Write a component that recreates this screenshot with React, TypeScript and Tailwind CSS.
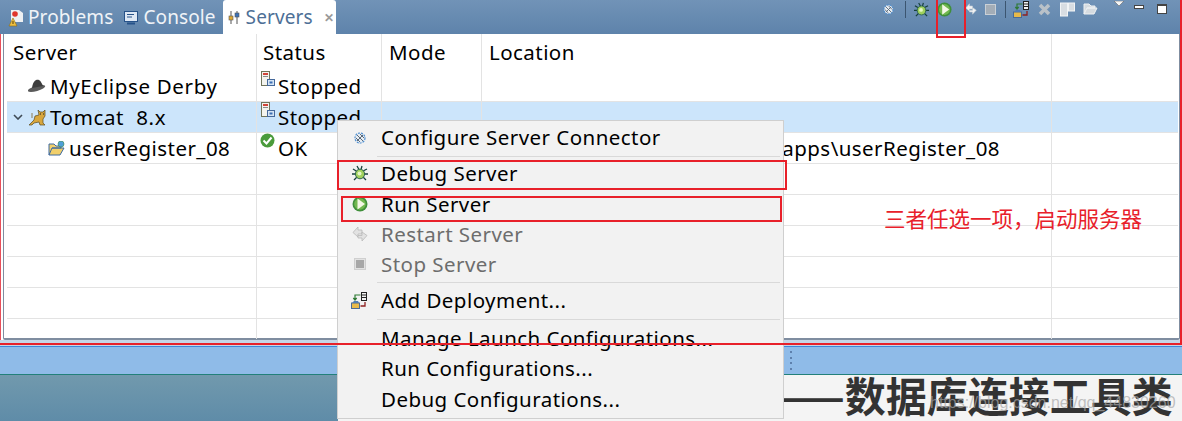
import type { ReactNode } from 'react';

const font = { fontFamily: '"Noto Sans", sans-serif' };

function StoppedIcon() {
  return (
    <svg width="14" height="15" viewBox="0 0 14 15" className="shrink-0">
      <rect x="0.5" y="0.5" width="8" height="14" fill="#f4f4ee" stroke="#70745a" />
      <rect x="2" y="2" width="5" height="2" fill="#d0453a" />
      <rect x="2" y="5" width="5" height="1" fill="#8a8a8a" />
      <rect x="6.5" y="8.5" width="7" height="6" fill="#d5e4f4" stroke="#45689a" />
      <rect x="8.5" y="10.5" width="3" height="2" fill="#3d6fb4" />
    </svg>
  );
}

function PlayIcon({ size = 16 }: { size?: number }) {
  return (
    <svg width={size} height={size} viewBox="0 0 16 16" className="shrink-0">
      <circle cx="8" cy="8" r="7.5" fill="#3f8f3a" />
      <circle cx="8" cy="8" r="5.8" fill="#72b84f" />
      <path d="M5.5 2.5 L13 8 L5.5 13.5 Z" fill="#f4f7e6" />
    </svg>
  );
}

function BugIcon({ size = 16 }: { size?: number }) {
  return (
    <svg width={size} height={size} viewBox="0 0 16 16" className="shrink-0">
      <path d="M1 4 L5 6.5 M15 4 L11 6 M0 9 L4 9 M16 9 L12 9 M2 15 L5 12 M14 15 L11 12 M5 1 L7 4.5 M10 1 L9 4.5" stroke="#17403c" strokeWidth="1.3" />
      <ellipse cx="8" cy="9" rx="4.6" ry="4.8" fill="#9fd05c" stroke="#2f6650" />
      <circle cx="7.5" cy="8.5" r="2" fill="#e4f6c6" />
    </svg>
  );
}

function RestartIcon({ size = 16, light }: { size?: number; light?: boolean }) {
  const a = light ? '#f2f3f4' : '#e2e2e2';
  const b = light ? '#c3ccd4' : '#b9b9b9';
  return (
    <svg width={size} height={size} viewBox="0 0 16 16" className="shrink-0">
      <path d="M1 6.5 L6 1 L6 4 L10 4 L10 8 L6 8 L6 11 Z" fill={a} stroke={b} strokeWidth="0.8" />
      <path d="M15 9.5 L10 15 L10 12 L6 12 L6 9.5 L10 9.5 L10 6 Z" fill={a} stroke={b} strokeWidth="0.8" />
    </svg>
  );
}

function StopIcon() {
  return (
    <svg width="12" height="12" viewBox="0 0 12 12" className="shrink-0">
      <rect x="0.5" y="0.5" width="11" height="11" fill="#e2e2e2" stroke="#cfcfcf" />
      <rect x="2" y="2" width="8" height="8" fill="#a8a8a8" />
    </svg>
  );
}

function ConnectorIcon({ size = 12 }: { size?: number }) {
  return (
    <svg width={size} height={size} viewBox="0 0 12 12" className="shrink-0">
      <circle cx="6" cy="6" r="5" fill="#e8edf2" stroke="#4f8fd0" strokeWidth="1.2" strokeDasharray="2 1" />
      <path d="M3 3 L9 9 M2 6 L6 10 M6 2 L10 6 M9 3 L3 9" stroke="#5c6b7b" strokeWidth="1" />
    </svg>
  );
}

function DeployIcon() {
  return (
    <svg width="17" height="17" viewBox="0 0 17 17" className="shrink-0">
      <rect x="0.5" y="11" width="8" height="5.5" fill="#e6b94a" stroke="#4a6a96" />
      <path d="M1 11 L3 9 L7 9 L8 11" fill="#4f7cb4" />
      <path d="M9.5 3 L4 3 L4 8 M2.3 6 L4 8 L5.7 6" stroke="#2f7a35" strokeWidth="1.2" fill="none" />
      <path d="M9.5 14 L14 14 L14 10" stroke="#8e2020" strokeWidth="1.3" fill="none" />
      <rect x="10.5" y="0.5" width="5" height="8" fill="#f2f2f2" stroke="#222" />
      <path d="M11 3 H15 M11 5.5 H15" stroke="#222" />
    </svg>
  );
}

function MenuRow({ icon, label, disabled, className = 'h-[30px]' }: { icon?: ReactNode; label: string; disabled?: boolean; className?: string }) {
  return (
    <div className={`flex items-center ${className}`}>
      <div className="flex w-[43px] shrink-0 justify-center">{icon}</div>
      <span className={`text-[20.5px] leading-none tracking-[0.45px] ${disabled ? 'text-[#6d6d6d]' : 'text-black'}`}>{label}</span>
    </div>
  );
}

function Cell({ className = '', children }: { className?: string; children?: ReactNode }) {
  return <div className={`flex items-center border-r border-[#e3e3e3] ${className}`}>{children}</div>;
}

function Row({ selected, server, status, location }: { selected?: boolean; server?: ReactNode; status?: ReactNode; location?: string }) {
  return (
    <div className={`flex h-[31px] border-b border-[#e3e3e3] ${selected ? 'bg-[#cce5fb]' : ''}`}>
      <Cell className="w-[250px]">{server}</Cell>
      <Cell className="w-[125px]">{status}</Cell>
      <Cell className="w-[100px]" />
      <Cell className="w-[570px] justify-end pr-[51px]">{location}</Cell>
      <div className="flex-1" />
    </div>
  );
}

function Status({ icon, label }: { icon: ReactNode; label: string }) {
  return (
    <div className="relative flex pl-[21px]">
      <div className="absolute left-[4px] top-0">{icon}</div>
      {label}
    </div>
  );
}

export default function App() {
  return (
    <div className="relative h-[421px] w-[1182px] overflow-hidden bg-[#f4f4f4]" style={font}>
      {/* tab bar */}
      <div className="flex h-[34px] items-start justify-between bg-gradient-to-b from-[#7193b7] to-[#5e83ab] pl-[8px] pr-[15px]">
        <div className="flex h-[34px] items-center text-[19px] tracking-[0.1px]">
          <div className="flex items-center gap-[5px] pt-px text-white/90">
            <svg width="15" height="18" viewBox="0 0 15 18" className="shrink-0">
              <path d="M3 1 H11 L15 4 V13 H3 Z" fill="#eef0f2" />
              <circle cx="7" cy="5" r="2.8" fill="#e0352b" />
              <path d="M1 17 L5 9 L9 17 Z" fill="#f0c040" stroke="#8a6a10" strokeWidth="0.6" />
              <rect x="4.5" y="12" width="1" height="3" fill="#5a4208" />
            </svg>
            <span>Problems</span>
          </div>
          <div className="ml-[11px] flex items-center gap-[5px] pt-px text-white/90">
            <svg width="14" height="14" viewBox="0 0 14 14" className="shrink-0">
              <rect x="0.5" y="0.5" width="13" height="10" fill="#dde8f5" stroke="#27538a" />
              <path d="M3 3.5 H10 M3 6 H8" stroke="#27538a" />
              <rect x="3" y="11.5" width="8" height="2" fill="#27538a" />
            </svg>
            <span>Console</span>
          </div>
          <div className="ml-[7px] flex h-[34px] w-[113px] items-center gap-[5px] rounded-t-[3px] bg-white pl-[5px] pt-px text-[#4d6f96]">
            <svg width="13" height="14" viewBox="0 0 13 14" className="shrink-0">
              <path d="M3 0 V13 M9 0 V13" stroke="#555" />
              <rect x="1" y="5" width="4" height="4" fill="#e0a92e" stroke="#555" strokeWidth="0.6" />
              <rect x="7" y="2" width="4" height="4" fill="#3c72b8" stroke="#555" strokeWidth="0.6" />
            </svg>
            <span>Servers</span>
            <span className="ml-[6px] text-[12px] font-bold text-[#9a9a9a]">✕</span>
          </div>
        </div>
        <div className="flex h-[18px] items-center">
          <ConnectorIcon size={11} />
          <div className="ml-[11px] h-[17px] w-px bg-[#3b5570]" />
          <div className="ml-[8px]"><BugIcon size={15} /></div>
          <div className="ml-[8px]"><PlayIcon size={15} /></div>
          <div className="ml-[13px]"><RestartIcon size={12} light /></div>
          <div className="ml-[8px] h-[11px] w-[11px] border border-[#c9d0d6] bg-[#a3adb7]" />
          <div className="ml-[9px] h-[17px] w-px bg-[#3b5570]" />
          <div className="ml-[7px]"><DeployIcon /></div>
          <svg width="13" height="13" viewBox="0 0 13 13" className="ml-[8px] shrink-0">
            <path d="M2 2 L11 11 M11 2 L2 11" stroke="#b9c1c8" strokeWidth="3.5" />
          </svg>
          <svg width="15" height="15" viewBox="0 0 15 15" className="ml-[9px] shrink-0">
            <rect x="0.5" y="1" width="7" height="13" fill="#d8dde2" stroke="#f2f4f5" />
            <rect x="8.5" y="1" width="6" height="8" fill="#d8dde2" stroke="#f2f4f5" />
          </svg>
          <svg width="15" height="12" viewBox="0 0 15 12" className="ml-[8px] shrink-0">
            <path d="M1 11 V1 H6 L8 3 H12 V5 H4 L1 11 H11 L14 5 H4" fill="#d5dbe0" stroke="#eef1f3" />
          </svg>
          <svg width="10" height="6" viewBox="0 0 10 6" className="mb-[10px] ml-[16px] shrink-0">
            <path d="M0 0 H10 L5 5 Z" fill="#f5f5f5" stroke="#555" strokeWidth="0.5" />
          </svg>
          <div className="mb-[5px] ml-[10px] h-[4px] w-[10px] border border-[#444] bg-white" />
          <div className="ml-[13px] h-[10px] w-[10px] border border-t-2 border-[#444] bg-white" />
        </div>
      </div>

      {/* servers panel */}
      <div className="h-[306px] border-l border-l-[#e8505b] bg-white pl-[2px] pr-[2px]">
        <div className="h-[306px] rounded-b-[2px] border-x border-b-2 border-[#7f8da0] pl-[3px] pr-[1px] text-[20.5px] tracking-[0.45px] text-black">
          <div className="flex h-[37px]">
            <Cell className="w-[250px] pl-[6px]">Server</Cell>
            <Cell className="w-[125px] pl-[6px]">Status</Cell>
            <Cell className="w-[100px] pl-[7px]">Mode</Cell>
            <Cell className="w-[570px] pl-[7px]">Location</Cell>
          </div>
          <Row
            server={
              <div className="flex items-center pl-[21px] tracking-[0.65px]">
                <svg width="18" height="14" viewBox="0 0 18 14" className="mr-[4px] shrink-0">
                  <ellipse cx="8.5" cy="9.5" rx="9" ry="2.6" transform="rotate(-16 8.5 9.5)" fill="#5a5a5a" />
                  <path d="M4 9 C5 2 8 0 11 1 C13 2 14 5 15 7 Z" fill="#3d3d3d" />
                </svg>
                MyEclipse Derby
              </div>
            }
            status={<Status icon={<StoppedIcon />} label="Stopped" />}
          />
          <Row
            selected
            server={
              <div className="flex items-center pl-[6px] tracking-[0.65px]">
                <svg width="10" height="6" viewBox="0 0 10 6" className="mr-[6px] shrink-0">
                  <path d="M1 1 L5 5 L9 1" stroke="#3e4a55" strokeWidth="1.6" fill="none" />
                </svg>
                <svg width="17" height="17" viewBox="0 0 17 17" className="mr-[4px] shrink-0">
                  <path d="M0 16 L5 11 L6 7 L10 6 L9 1 L11 3 L14 3 L16 1 L16 7 L14 10 L14 14 L16 16 L11 16 L10 13 L5 14 L3 16 Z" fill="#d8a63c" stroke="#5a4a20" strokeWidth="0.7" />
                  <path d="M11 5 H12 M14 5 H15" stroke="#222" />
                  <path d="M3 4 V9" stroke="#8a7a55" />
                </svg>
                <span className="whitespace-pre">Tomcat  8.x</span>
              </div>
            }
            status={<Status icon={<StoppedIcon />} label="Stopped" />}
          />
          <Row
            server={
              <div className="flex items-center pl-[41px]">
                <svg width="17" height="15" viewBox="0 0 17 15" className="mr-[4px] shrink-0">
                  <path d="M1 14 V3 H6 L8 5 H13 V7 H4 L1 14 H12 L16 7 H4" fill="#f1cf6b" stroke="#3f6aa0" />
                  <circle cx="13" cy="3" r="3" fill="#4f9fd8" stroke="#3b8a4a" strokeWidth="0.6" />
                </svg>
                userRegister_08
              </div>
            }
            status={
              <Status
                icon={
                  <svg width="15" height="15" viewBox="0 0 15 15" className="-ml-px">
                    <circle cx="7.5" cy="7.5" r="7" fill="#4a9b3b" />
                    <path d="M3.5 7.5 L6.5 10.5 L11.5 4.5" stroke="#fff" strokeWidth="2" fill="none" />
                  </svg>
                }
                label="OK"
              />
            }
            location="apps\userRegister_08"
          />
          <Row />
          <Row />
          <Row />
          <Row />
          <Row />
          <div className="flex h-[20px]">
            <Cell className="w-[250px]" />
            <Cell className="w-[125px]" />
            <Cell className="w-[100px]" />
            <Cell className="w-[570px]" />
          </div>
        </div>
      </div>

      {/* lower strip */}
      <div className="h-[6px] bg-[#c5d5e6]" />
      <div className="flex h-[29px] items-center border-y border-t-[#3f86d8] border-b-[#22807a] bg-[#8fbbe8] pl-[790px]">
        <div className="flex h-[19px] w-[2px] flex-col justify-between">
          <div className="h-[2px] bg-[#5d80ad]" />
          <div className="h-[2px] bg-[#5d80ad]" />
          <div className="h-[2px] bg-[#5d80ad]" />
          <div className="h-[2px] bg-[#5d80ad]" />
        </div>
      </div>
      <div className="flex h-[46px]">
        <div className="w-[338px] bg-gradient-to-b from-[#7199ad] to-[#5f8ca8]" />
        <div className="flex-1 overflow-hidden whitespace-nowrap pl-[437px] text-[41px] font-bold leading-[38px] text-[#333]" style={{ fontFamily: '"Noto Sans CJK SC", sans-serif' }}>
          ——数据库连接工具类
        </div>
      </div>

      {/* watermark */}
      <div className="absolute left-[930px] top-[391px] whitespace-nowrap text-[16px] text-[#a8a8a8]/70" style={{ fontFamily: '"Liberation Sans", sans-serif' }}>
        https://blog.csdn.net/qq_44830260
      </div>

      {/* context menu */}
      <div className="absolute left-[337px] top-[120px] h-[299px] w-[447px] border border-[#cfcfcf] bg-[#f2f2f2]">
        <MenuRow icon={<ConnectorIcon />} label="Configure Server Connector" className="h-[33px]" />
        <div className="ml-[39px] mr-[3px] mt-[2px] h-px bg-[#d9d9d9]" />
        <div className="h-px" />
        <MenuRow icon={<BugIcon />} label="Debug Server" className="mb-px h-[30px]" />
        <MenuRow icon={<PlayIcon />} label="Run Server" />
        <MenuRow icon={<RestartIcon />} label="Restart Server" disabled />
        <MenuRow icon={<StopIcon />} label="Stop Server" disabled />
        <div className="mb-[2px] ml-[39px] mr-[3px] mt-[3px] h-px bg-[#d9d9d9]" />
        <MenuRow icon={<DeployIcon />} label="Add Deployment..." />
        <div className="mb-[3px] ml-[39px] mr-[3px] mt-[4px] h-px bg-[#d9d9d9]" />
        <MenuRow label="Manage Launch Configurations..." />
        <MenuRow label="Run Configurations..." className="h-[31px]" />
        <MenuRow label="Debug Configurations..." className="h-[31px]" />
      </div>

      {/* red annotations */}
      <div className="absolute left-[936px] top-0 h-[38px] w-[30px] border-2 border-t-0 border-[#e8202a]" />
      <div className="absolute left-[337px] top-[160px] h-[30px] w-[450px] border-2 border-[#e8202a]" />
      <div className="absolute left-[341px] top-[196px] h-[26px] w-[441px] border-2 border-[#e8202a]" />
      <div className="absolute left-0 top-[343px] h-px w-[1182px] border-t-2 border-[#e8202a]" />
      <div className="absolute right-0 top-0 h-[345px] w-[2px] bg-[#e8202a]" />
      <div className="absolute left-[884px] top-[207px] whitespace-nowrap text-[21.5px] leading-none text-[#e8202a]" style={{ fontFamily: '"Noto Sans CJK SC", sans-serif' }}>
        三者任选一项，启动服务器
      </div>
    </div>
  );
}
